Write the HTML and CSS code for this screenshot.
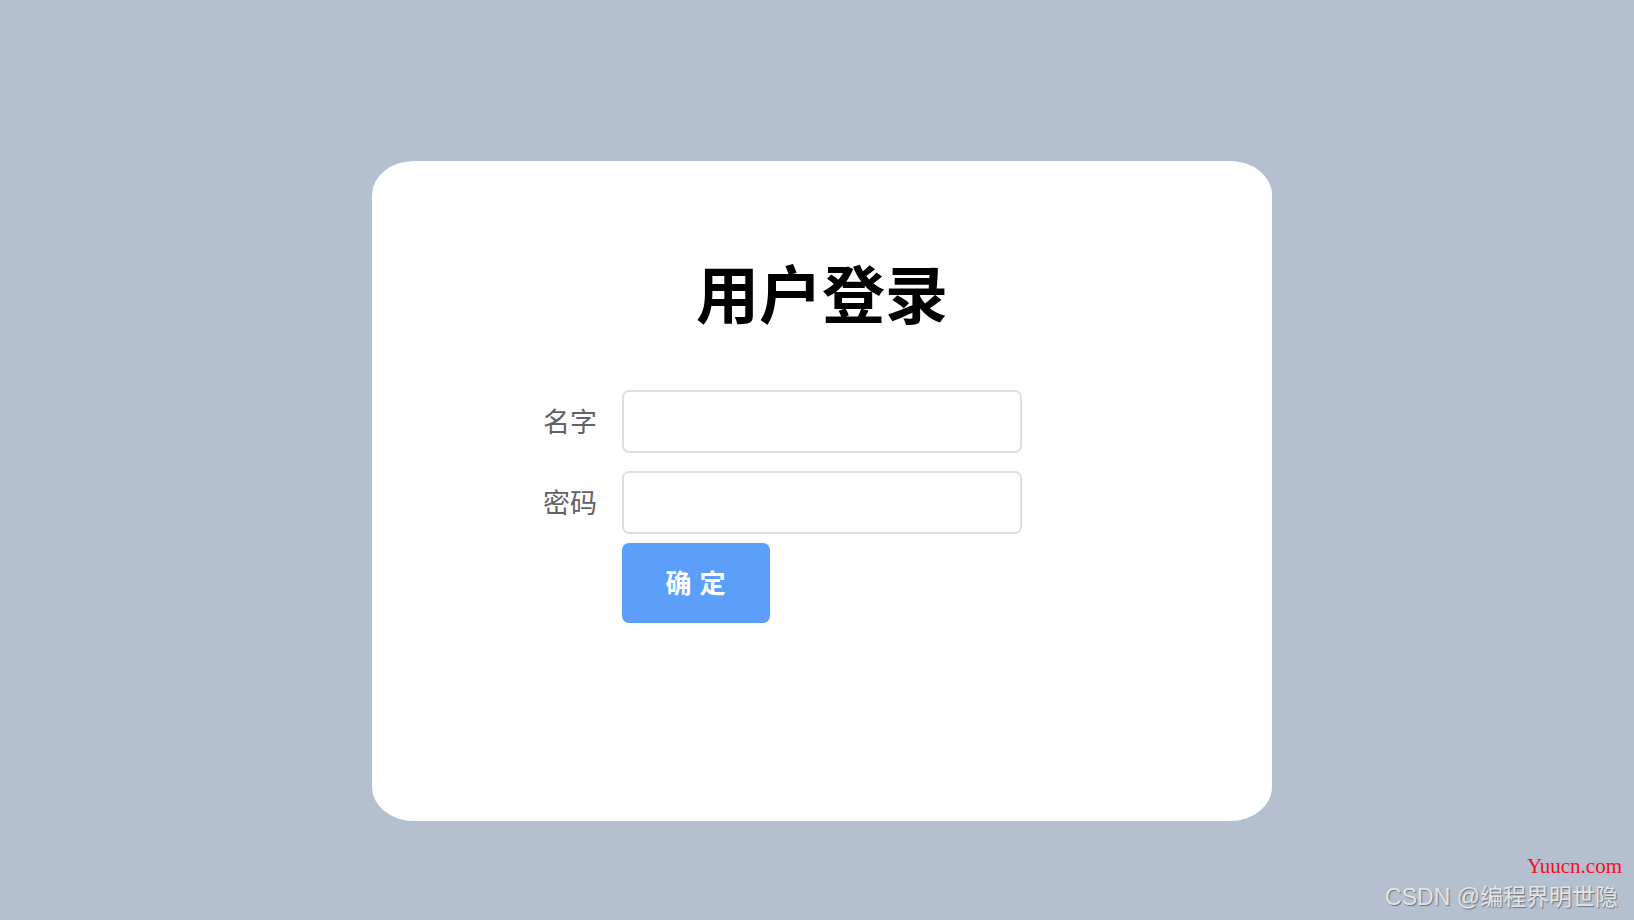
FILE: index.html
```html
<!DOCTYPE html>
<html lang="zh-CN">
<head>
<meta charset="utf-8">
<title>用户登录</title>
<link rel="stylesheet" href="styles.css">
</head>
<body>
<div class="page">
  <div class="card">
    <h1 class="title">用户登录</h1>
    <form class="form">
      <div class="row">
        <label class="label">名字</label>
        <input class="input" type="text">
      </div>
      <div class="row">
        <label class="label">密码</label>
        <input class="input" type="password">
      </div>
      <div class="row">
        <span class="label"></span>
        <button class="btn" type="button">确 定</button>
      </div>
    </form>
  </div>
</div>
<div class="watermark">
  <div class="wm-site">Yuucn.com</div>
  <div class="wm-csdn">CSDN @编程界明世隐</div>
</div>
</body>
</html>
```
FILE: styles.css
```css
html, body {
  margin: 0;
  padding: 0;
  height: 100%;
}
body {
  background: #b4c0cf;
  font-family: "Noto Sans CJK SC", "Noto Sans", sans-serif;
  overflow: hidden;
}
.page {
  padding: 161px 0 0 372px;
}
.card {
  width: 900px;
  height: 660px;
  box-sizing: border-box;
  background: #ffffff;
  border-radius: 42px 42px 42px 42px / 34px 34px 34px 34px;
  padding-top: 92px;
}
.title {
  margin: 0;
  text-align: center;
  font-size: 63px;
  line-height: 76px;
  font-weight: 700;
  color: #000;
}
.form {
  margin-top: 61px;
  display: flex;
  flex-direction: column;
  gap: 18px;
}
.row {
  display: flex;
  align-items: center;
}
.row:last-child {
  margin-top: -9px;
}
.label {
  width: 250px;
  box-sizing: border-box;
  padding-right: 25px;
  text-align: right;
  font-size: 27px;
  line-height: 36px;
  color: #5f6266;
  padding-bottom: 2px;
}
.input {
  width: 400px;
  height: 63px;
  box-sizing: border-box;
  border: 2px solid #dcdfe6;
  border-radius: 7px;
  background: #fff;
  outline: none;
  font-size: 20px;
  padding: 0 14px;
  margin: 0;
}
.btn {
  width: 148px;
  height: 80px;
  margin: 0;
  border: none;
  border-radius: 7px;
  background: #5c9ffa;
  color: #fff;
  font-family: "Noto Sans CJK SC", sans-serif;
  font-size: 26px;
  font-weight: 700;
  letter-spacing: 1px;
  padding: 0 0 3px 0;
}
.watermark {
  position: absolute;
  right: 12px;
  bottom: 8px;
  text-align: right;
}
.wm-site {
  font-family: "Liberation Serif", serif;
  font-size: 21px;
  color: #ff0a1e;
  line-height: 24px;
  margin-bottom: 4px;
}
.wm-csdn {
  font-family: "Liberation Sans", "Noto Sans CJK SC", sans-serif;
  font-size: 23px;
  line-height: 30px;
  color: #e2e4e8;
  text-shadow: 1px 1px 1px #6d737c;
  margin-right: 4px;
}
```
